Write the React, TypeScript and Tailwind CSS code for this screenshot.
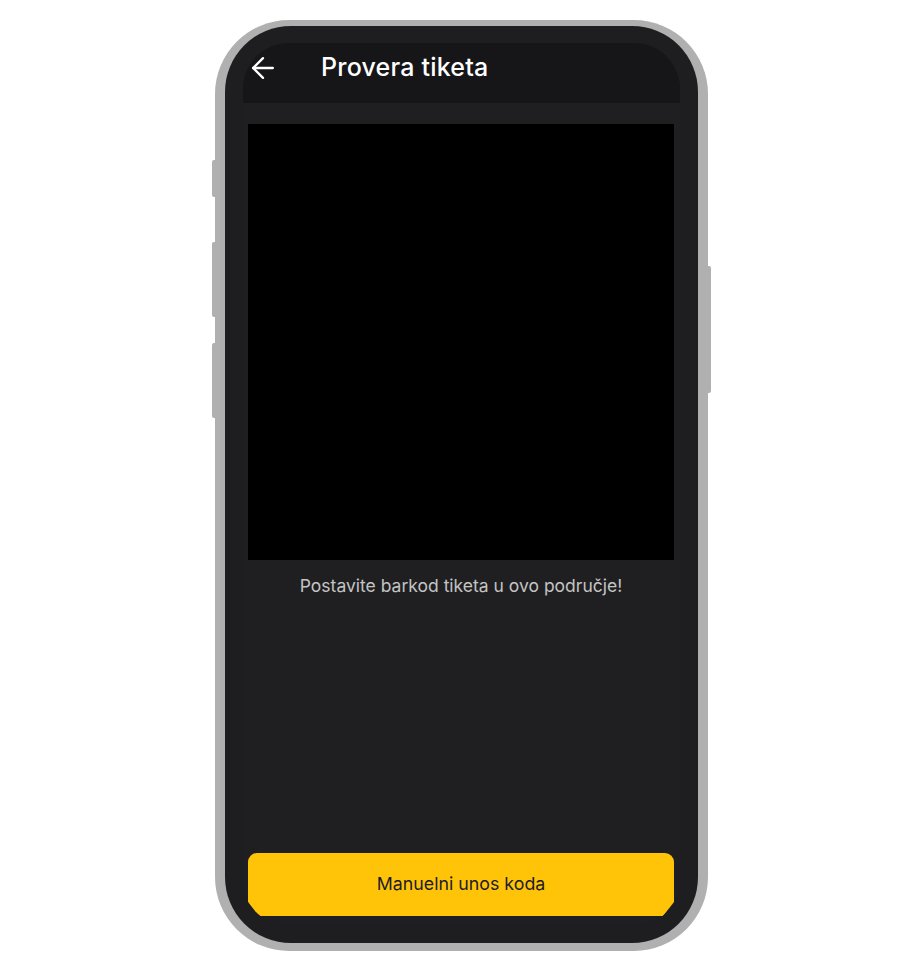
import { ArrowLeft } from "lucide-react"

function SideButtons() {
  return (
    <>
      {/* left side keys */}
      <div className="absolute left-[-3px] top-[140px] w-[4px] h-[37px] rounded-l-[2px] bg-[#b0b0b0]" />
      <div className="absolute left-[-3px] top-[222px] w-[4px] h-[75px] rounded-l-[2px] bg-[#b0b0b0]" />
      <div className="absolute left-[-3px] top-[323px] w-[4px] h-[75px] rounded-l-[2px] bg-[#b0b0b0]" />
      {/* right side key */}
      <div className="absolute right-[-3px] top-[246px] w-[4px] h-[127px] rounded-r-[2px] bg-[#b0b0b0]" />
    </>
  )
}

export default function App() {
  return (
    <div className="w-full h-[972px] bg-white flex pl-[215px] pt-[20px] font-['Inter','Noto_Sans',sans-serif]">
      <div className="relative w-[493px] h-[931px] bg-[#b0b0b0] rounded-[74px] pt-[6px] px-[10px] pb-[8px]">
        <SideButtons />
        <div className="h-full bg-[#1e1e20] rounded-[66px] pt-[17px] px-[18px] pb-[20px]">
          <div className="h-full rounded-t-[46px] rounded-b-[40px] overflow-hidden bg-[#1f1f21] flex flex-col">
            {/* Header */}
            <div className="h-[60px] bg-[#161618] shrink-0">
              <div className="h-[49px] flex items-center pl-[3px]">
                <ArrowLeft className="w-[34px] h-[34px] text-white" strokeWidth={1.6} />
                <h1 className="ml-[41px] text-[25px] font-medium text-white tracking-[0.2px]">Provera tiketa</h1>
              </div>
            </div>

            {/* Content */}
            <div className="flex-1 flex flex-col pl-[5px] pr-[6px] pt-[21px] pb-[7px]">
              <div className="h-[436px] bg-black shrink-0" />
              <p className="mt-[12px] text-center text-[17.5px] leading-[28px] text-[#c4c4c4]">
                Postavite barkod tiketa u ovo područje!
              </p>
              <div className="flex-1" />
              <button className="h-[63px] w-full bg-[#ffc408] rounded-t-[9px] text-[17.8px] text-[#1c1c28] [clip-path:polygon(0_0,100%_0,100%_calc(100%-14px),calc(100%-11px)_100%,11px_100%,0_calc(100%-14px))]">
                Manuelni unos koda
              </button>
            </div>
          </div>
        </div>
      </div>
    </div>
  )
}
